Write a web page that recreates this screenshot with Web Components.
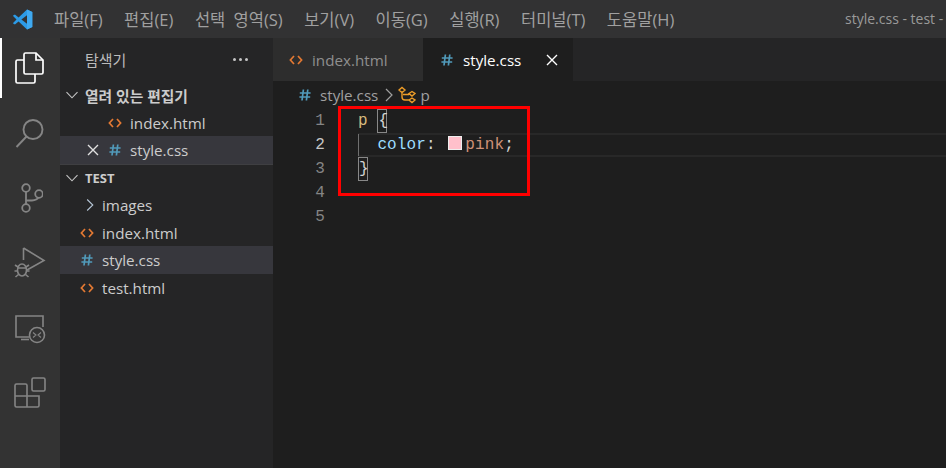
<!DOCTYPE html>
<html lang="ko">
<head>
<meta charset="utf-8">
<title>style.css - test</title>
<style>
  html, body { margin: 0; padding: 0; height: 100%; background: #1e1e1e; overflow: hidden; }
  body { font-family: "Open Sans", "Noto Sans CJK KR", sans-serif; }
  .main { display: flex; height: 430px; }
</style>
</head>
<body>
<vs-titlebar title-text="style.css - test -">
  <span>파일(F)</span><span>편집(E)</span><span>선택 영역(S)</span><span>보기(V)</span><span>이동(G)</span><span>실행(R)</span><span>터미널(T)</span><span>도움말(H)</span>
</vs-titlebar>
<div class="main">
  <vs-activitybar></vs-activitybar>
  <vs-sidebar></vs-sidebar>
  <vs-editor></vs-editor>
</div>

<script>
const FONT = '"Open Sans", "Noto Sans CJK KR", sans-serif';

const ICONS = {
  html: `<svg width="14" height="12" viewBox="0 0 14 12" fill="none" stroke="#e37933" stroke-width="1.7"><path d="M5 2 1.4 6 5 10M9 2l3.6 4L9 10"/></svg>`,
  css: `<svg width="12" height="12" viewBox="0 0 12 12" fill="none" stroke="#519aba" stroke-width="1.7"><path d="M4.400.5 3 11.500M8.800.5 7.400 11.500M.8 4h10.800M.4 8h10.800"/></svg>`,
  down: `<svg width="14" height="14" viewBox="0 0 14 14" fill="none" stroke="#c5c5c5" stroke-width="1.1"><path d="M1.500 4.200 7 9.800l5.500-5.600"/></svg>`,
  right: `<svg width="14" height="14" viewBox="0 0 14 14" fill="none" stroke="#b5c5d5" stroke-width="1.1"><path d="M4.200 1.500 9.800 7l-5.600 5.500"/></svg>`,
  close: `<svg width="12" height="12" viewBox="0 0 12 12" fill="none" stroke="#e0e0e0" stroke-width="1.4"><path d="M1 1l10 10M11 1 1 11"/></svg>`
};

class VsTitlebar extends HTMLElement {
  constructor() {
    super();
    this.attachShadow({ mode: "open" });
  }
  connectedCallback() {
    this.shadowRoot.innerHTML = `
      <style>
        :host { display: flex; align-items: center; height: 38px; background: #323233; color: #a0a0a0; font: 16.500px ${FONT}; word-spacing: 4px; position: relative; overflow: hidden; white-space: nowrap; }
        .logo { width: 54px; flex: none; display: flex; padding-left: 12px; box-sizing: border-box; }
        nav { display: flex; gap: 21.500px; }
        ::slotted(span) { display: block; }
        .title { position: absolute; left: 845px; top: 9px; font-size: 14px; word-spacing: 0; color: #9a9a9a; }
      </style>
      <div class="logo">
        <svg width="21" height="21" viewBox="0 0 21 21">
          <path d="M15 .6 20.300 3v15l-5.300 2.500L6.600 12.600l-3.700 2.800L.8 14.300 4.500 10.500.8 6.700l2.100-1.100 3.700 2.800z" fill="#2c9ae6"/>
          <path d="M15 .6 20.300 3v15L15 20.500z" fill="#3fa9f0"/>
          <path d="M15 6.300v8.500L9.400 10.500z" fill="#323233"/>
        </svg>
      </div>
      <nav><slot></slot></nav>
      <div class="title">${this.getAttribute("title-text")}</div>`;
  }
}

class VsActivitybar extends HTMLElement {
  constructor() {
    super();
    this.attachShadow({ mode: "open" });
  }
  connectedCallback() {
    this.shadowRoot.innerHTML = `
      <style>
        :host { display: flex; flex-direction: column; width: 60px; flex: none; background: #333333; }
        .item { height: 65px; flex: none; display: flex; align-items: center; justify-content: center; box-sizing: border-box; }
        .active { height: 60px; margin-bottom: 2.500px; border-left: 2px solid #fff; padding-right: 2px; }
        svg { fill: none; stroke: #858585; stroke-width: 1.600; }
        .active svg { stroke: #fff; stroke-width: 1.700; }
      </style>
      <div class="item active">
        <svg width="30" height="32" viewBox="0 0 30 32">
          <path d="M9 8H2.500Q1 8 1 9.500v20Q1 31 2.500 31h16q1.500 0 1.500-1.500V22"/>
          <path d="M10.500 1H21l7 7v12.500q0 1.500-1.500 1.500h-16Q9 22 9 20.500v-18Q9 1 10.500 1z"/>
          <path d="M21 1v7h7"/>
        </svg>
      </div>
      <div class="item">
        <svg width="32" height="32" viewBox="0 0 32 32" style="stroke-width:1.900">
          <circle cx="19" cy="12.500" r="9.500"/><path d="M12.500 19.500 2.500 30"/>
        </svg>
      </div>
      <div class="item">
        <svg width="26" height="32" viewBox="0 0 26 32" style="stroke-width:1.800">
          <circle cx="9" cy="6" r="3.800"/><circle cx="22" cy="12" r="3.800"/><circle cx="9" cy="26" r="3.800"/>
          <path d="M9 9.800v12.400M9 18.500h6q5 0 6.500-3.300"/>
        </svg>
      </div>
      <div class="item">
        <svg width="32" height="34" viewBox="0 0 32 34" style="stroke-width:1.600">
          <path d="M9.500 2 30 14.500 13 24M9.500 2v12"/>
          <ellipse cx="8" cy="24" rx="4.500" ry="6"/>
          <path d="M1 19l3 2M15 19l-3 2M.5 25h3M15.500 25h-3M1.500 31l3-2.500M14.500 31l-3-2.500M3.500 22h9"/>
        </svg>
      </div>
      <div class="item">
        <svg width="32" height="32" viewBox="0 0 32 32">
          <path d="M15 25H2V4h27v11"/><path d="M7 27.500h8"/>
          <circle cx="23" cy="23" r="7.500"/>
          <path d="M19 20.500l3 2.500-3 2.500M27 20.500l-3 2.500 3 2.500" stroke-width="1.100"/>
        </svg>
      </div>
      <div class="item">
        <svg width="32" height="32" viewBox="0 0 32 32">
          <rect x="18" y="1" width="13" height="13" rx="1.500"/>
          <path d="M13 19V8.500Q13 7 11.500 7h-9Q1 7 1 8.500v20Q1 30 2.500 30h21q1.500 0 1.500-1.500V19H1M13 19v11"/>
        </svg>
      </div>`;
  }
}

class VsTreeRow extends HTMLElement {
  constructor() {
    super();
    this.attachShadow({ mode: "open" });
  }
  connectedCallback() {
    const kind = this.getAttribute("kind");
    const pad = this.getAttribute("pad") || "0";
    const lead = this.getAttribute("lead");
    this.shadowRoot.innerHTML = `
      <style>
        :host { display: flex; align-items: center; height: 27.500px; color: #cccccc; font-size: 15.200px; white-space: nowrap; }
        :host([selected]) { background: #37373d; }
        :host([head]) { font-weight: 700; font-size: 14.800px; }
        :host([latin]) { font-size: 13px; }
        .lead { display: flex; align-items: center; justify-content: center; width: 14px; margin-right: var(--lead-gap, 7px); flex: none; }
        .icon { display: flex; align-items: center; justify-content: center; width: 14px; flex: none; margin-right: 8px; }
        .pad { flex: none; }
      </style>
      <div class="pad" style="width:${pad}px"></div>
      ${lead ? `<div class="lead">${ICONS[lead]}</div>` : ""}
      ${kind ? `<div class="icon">${ICONS[kind]}</div>` : ""}
      <span><slot></slot></span>`;
  }
}

class VsSidebar extends HTMLElement {
  constructor() {
    super();
    this.attachShadow({ mode: "open" });
  }
  connectedCallback() {
    this.shadowRoot.innerHTML = `
      <style>
        :host { display: block; width: 213px; flex: none; background: #252526; }
        header { display: flex; align-items: center; justify-content: space-between; height: 43.400px; padding: 0 25px; color: #bbbbbb; font-size: 15px; }
        .dots { display: flex; gap: 3px; }
        .dots i { width: 3px; height: 3px; border-radius: 50%; background: #c5c5c5; }
        section + section { position: relative; }
        section + section::before { content: ""; position: absolute; left: 0; right: 0; top: 0; height: 1px; background: #3f3f42; }
      </style>
      <header><span>탐색기</span><div class="dots"><i></i><i></i><i></i></div></header>
      <section>
        <vs-tree-row head pad="5" lead="down" style="--lead-gap:6px">열려 있는 편집기</vs-tree-row>
        <vs-tree-row pad="48" kind="html">index.html</vs-tree-row>
        <vs-tree-row selected pad="26" lead="close" kind="css" style="--lead-gap:8px">style.css</vs-tree-row>
      </section>
      <section>
        <vs-tree-row head latin pad="5" lead="down" style="--lead-gap:6px">TEST</vs-tree-row>
        <vs-tree-row pad="23" lead="right" style="--lead-gap:5px">images</vs-tree-row>
        <vs-tree-row pad="20" kind="html">index.html</vs-tree-row>
        <vs-tree-row selected pad="20" kind="css">style.css</vs-tree-row>
        <vs-tree-row pad="20" kind="html">test.html</vs-tree-row>
      </section>`;
  }
}

class VsTab extends HTMLElement {
  constructor() {
    super();
    this.attachShadow({ mode: "open" });
  }
  connectedCallback() {
    const kind = this.getAttribute("kind");
    this.shadowRoot.innerHTML = `
      <style>
        :host { display: flex; align-items: center; width: 150px; flex: none; box-sizing: border-box; padding-left: 17px; background: #2d2d2d; color: #8f8f8f; font-size: 15.200px; position: relative; }
        :host([active]) { background: #1e1e1e; color: #ffffff; }
        :host(:not([active])) { padding-left: 16px; }
        .icon { display: flex; width: 14px; justify-content: center; margin-right: 9px; }
        .x { position: absolute; left: 123px; top: 16px; display: flex; }
        .x svg { stroke: #ffffff; }
      </style>
      <div class="icon">${ICONS[kind]}</div>
      <span><slot></slot></span>
      ${this.hasAttribute("active") ? `<div class="x">${ICONS.close}</div>` : ""}`;
  }
}

class VsEditor extends HTMLElement {
  constructor() {
    super();
    this.attachShadow({ mode: "open" });
  }
  connectedCallback() {
    const nums = [1, 2, 3, 4, 5];
    this.shadowRoot.innerHTML = `
      <style>
        :host { display: flex; flex-direction: column; flex: 1; min-width: 0; background: #1e1e1e; position: relative; }
        .tabs { display: flex; height: 43px; background: #252526; flex: none; }
        .crumbs { display: flex; align-items: center; height: 28px; padding-bottom: 1px; box-sizing: border-box; padding-left: 26px; gap: 8px; color: #a0a0a0; font-size: 15.200px; flex: none; }
        .crumbs .file { margin-left: 1px; margin-right: -1px; }
        .crumbs .sym { display: flex; align-items: center; gap: 4px; margin-left: -3px; }
        .code { display: flex; font: 16px "Liberation Mono", monospace; letter-spacing: .1px; line-height: 24px; flex: none; }
        .gutter { width: 85px; flex: none; }
        .num { padding-right: 33px; text-align: right; color: #858585; height: 24px; }
        .num.cur { color: #c6c6c6; }
        .lines { flex: 1; }
        .ln { height: 24px; white-space: pre; box-sizing: border-box; position: relative; }
        .ln.cur { border-top: 2px solid #282828; border-bottom: 2px solid #282828; line-height: 20px; }
        .ln.cur .guide { position: absolute; left: 0; top: -1px; bottom: -1px; width: 1px; background: #707070; }
        .sel { color: #d7ba7d; }
        .brace { display: inline-block; height: 24px; width: 10px; box-sizing: border-box; text-align: center; letter-spacing: 0; color: #d4d4d4; border: 1px solid #888888; line-height: 22px; vertical-align: top; }
        .prop { color: #9cdcfe; }
        .val { color: #ce9178; }
        .swatch { display: inline-block; width: 14px; height: 14px; box-sizing: border-box; background: #ffc0cb; border: 1px solid #eeeeee; margin: 0 3px 0 3px; vertical-align: -1px; }
        .mark { position: absolute; left: 65px; top: 68px; width: 192px; height: 90px; box-sizing: border-box; border: 3px solid #ff0000; }
      </style>
      <div class="tabs">
        <vs-tab kind="html">index.html</vs-tab>
        <vs-tab kind="css" active>style.css</vs-tab>
      </div>
      <div class="crumbs">
        ${ICONS.css}
        <span class="file">style.css</span>
        <svg width="8" height="14" viewBox="0 0 8 14" fill="none" stroke="#a0a0a0" stroke-width="1.200"><path d="M1 1l6 6-6 6"/></svg>
        <span class="sym">
          <svg width="18" height="18" viewBox="0 0 18 18" fill="none" stroke="#ee9d28" stroke-width="1.400"><path d="M1 4l3-2.500L7 4 4 6.500zM11 7.500l3-2 3 2-3 2.500zM11 14l3-2 3 2-3 2.500zM4 6.500V11q0 3 3 3h4M5 8.500h6"/></svg>
          <span>p</span>
        </span>
      </div>
      <div class="code">
        <div class="gutter">${nums.map(n => `<div class="num ${n === 2 ? "cur" : ""}">${n}</div>`).join("")}</div>
        <div class="lines">
          <div class="ln"><span class="sel">p</span> <span class="brace">{</span></div>
          <div class="ln cur"><span class="guide"></span>  <span class="prop">color</span><span style="color:#d4d4d4">:</span> <span class="swatch"></span><span class="val">pink</span><span style="color:#d4d4d4">;</span></div>
          <div class="ln"><span class="brace">}</span></div>
        </div>
      </div>
      <div class="mark"></div>`;
  }
}

customElements.define("vs-titlebar", VsTitlebar);
customElements.define("vs-activitybar", VsActivitybar);
customElements.define("vs-tree-row", VsTreeRow);
customElements.define("vs-sidebar", VsSidebar);
customElements.define("vs-tab", VsTab);
customElements.define("vs-editor", VsEditor);
</script>
</body>
</html>
